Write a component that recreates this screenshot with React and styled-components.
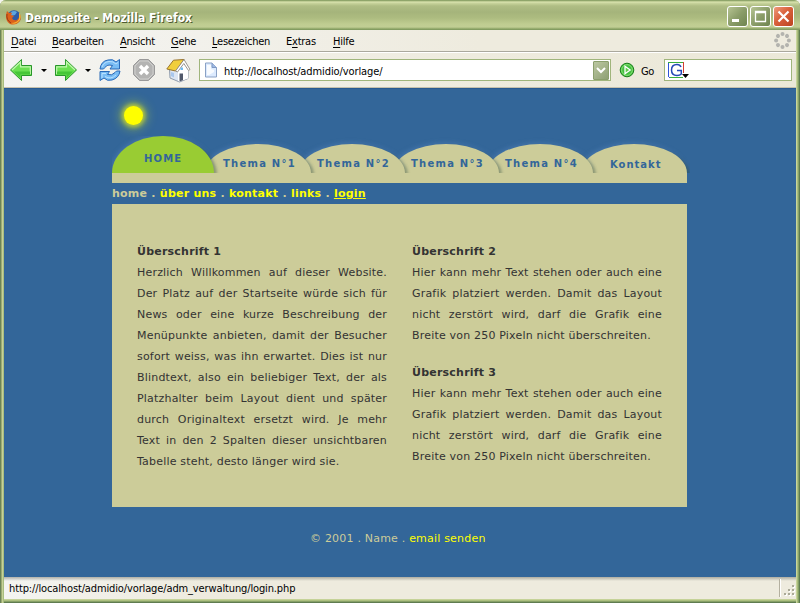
import React from "react";
import styled, { createGlobalStyle } from "styled-components";

const Global = createGlobalStyle`
  * { box-sizing: border-box; }
  body { margin: 0; background: #f4f4ee; overflow: hidden; }
  svg { display: block; flex: none; }
`;
const tahoma = `"DejaVu Sans Condensed", "DejaVu Sans", sans-serif`;
const verdana = `"DejaVu Sans", Verdana, sans-serif`;

const Window = styled.div`
  width: 800px; height: 603px; display: flex; flex-direction: column;
  padding: 0 4px 4px; border-radius: 6px 6px 0 0;
  background:
    linear-gradient(90deg, #6b8458 0 1px, #9cab71 1px 2px, #c5d298 2px 3px, #a9bd7e 3px 4px, transparent 4px 796px, #c8d59c 796px 797px, #a9bc7c 797px 798px, #87a067 798px 799px, #5f7c50 799px),
    linear-gradient(#c5d298 0 600px, #adc080 600px 601px, #87a067 601px 602px, #5f7c50 602px);
`;
const TitleBar = styled.header`
  height: 30px; margin: 0 -4px; padding: 4px 6px 0 5px; flex: none;
  display: flex; align-items: center; border-radius: 6px 6px 0 0;
  background: linear-gradient(#7b955d 0, #a3b578 1px, #dce5b2 2px, #c9d59d 3px, #afbd84 6px, #a5b47b 12px, #adbc80 18px, #bfcc91 24px, #c1ce94 27px, #8ba365 29px, #7b955d 30px);
`;
const Title = styled.h1`
  margin: 1px auto 0 3px; font: bold 12px/18px ${tahoma}; letter-spacing: 0.03px;
  color: #fff; text-shadow: 1px 1px 0 #4d5a31; white-space: nowrap;
`;
const Caption = styled.button`
  width: 21px; height: 21px; margin: -1px 0 0 2px; padding: 0; border: 1px solid #fff; border-radius: 3px;
  background: ${p => p.$close ? "linear-gradient(135deg,#ee9b7d,#d9603b 45%,#bc4421)" : "linear-gradient(135deg,#b6c492,#8b9d69 50%,#6f8550)"};
`;
const MenuBar = styled.nav`
  height: 22px; flex: none; display: flex; align-items: center; gap: 15px; padding: 0 5px 0 7px;
  background: linear-gradient(90deg, #f5f5f4, #eeebde 60%, #eeebde);
  border-bottom: 1px solid #aaa89d; font: 11px/20px ${tahoma}; color: #000;
`;
const MenuItem = styled.span`
  width: ${p => p.$w}px; white-space: nowrap; letter-spacing: -0.25px; padding-top: 2px;
  & u { text-underline-offset: 2px; }
`;
const Spacer = styled.span`flex: 1;`;
const Toolbar = styled.div`
  height: 36px; flex: none; display: flex; align-items: center; padding: 0 4px 0 5px;
  background: linear-gradient(90deg, #f4f4f2, #eeebde 60%, #ebe8d8);
  border-top: 1px solid #fff; border-bottom: 1px solid #c6c1ad; font: 11px/20px ${tahoma};
`;
const Arrow = styled.span`
  border: 3px solid transparent; border-top-color: #000; border-bottom: 0;
  width: 6px; margin: 1px ${p => p.$r}px 0 ${p => p.$l}px;
`;
const IconSlot = styled.span`margin-left: ${p => p.$ml}px;`;
const Field = styled.div`
  height: 22px; width: ${p => p.$w}px; margin-left: ${p => p.$ml}px; padding: 0 1px 0 4px; flex: none;
  display: flex; align-items: center; background: #fff; border: 1px solid #a0b57c;
`;
const Url = styled.span`margin-left: 6px; padding-top: 3px; flex: 1; letter-spacing: -0.1px; white-space: nowrap;`;
const Go = styled.span`margin-left: 6px; padding-top: 3px; width: 16px; letter-spacing: -0.5px;`;
const DropButton = styled.button`
  width: 16px; height: 19px; padding: 0; border: 1px solid #8b9f6d; border-radius: 1px;
  background: linear-gradient(135deg, #bbc7a1, #8fa075); display: flex; align-items: center; justify-content: center;
`;
const Viewport = styled.main`
  height: 489px; flex: none; padding: 0 109px 0 108px; background: #336699; border-top: 1px solid #285a91;
  font: 11px/21px ${verdana};
`;
const Logo = styled.div`height: 47px; padding: 17px 0 0 12px;`;
const Sun = styled.div`
  width: 19px; height: 19px; border-radius: 50%; background: #ff0;
  box-shadow: 0 0 4px 2px rgba(225, 232, 30, .7), 0 0 10px 5px rgba(175, 205, 60, .42);
`;
const Tabs = styled.div`
  height: 37px; display: flex; align-items: flex-end; position: relative; z-index: 0;
  margin-right: -3px; padding-right: 3px; overflow: hidden;
`;
const Tab = styled.a`
  position: relative; z-index: ${p => p.$z}; flex: none;
  width: ${p => p.$active ? 102 : 106}px; height: ${p => p.$active ? 37 : 29}px;
  margin-left: ${p => p.$ml}px; padding: ${p => p.$pt}px 0 0 ${p => p.$pl}px;
  border-radius: 50% 50% 0 0 / 100% 100% 0 0;
  background: ${p => p.$active ? "#99cc33" : "#cccc99"}; color: #336699;
  box-shadow: 3px 2px 3px rgba(45, 70, 55, .38), -1px -1px 5px rgba(105, 150, 205, .35);
  font-weight: bold; font-size: 10px; line-height: 14px; letter-spacing: ${p => p.$ls}px; white-space: nowrap;
`;
const TabBase = styled.div`height: 10px; background: #cccc99;`;
const Crumbs = styled.div`
  height: 21px; line-height: 21px; color: #cccc99; font-weight: bold; letter-spacing: 0.24px; white-space: pre;
  & a { color: #ff0; }
`;
const Panel = styled.section`
  height: 303px; padding: 37px 25px 0; display: grid; grid-template-columns: 250px 250px;
  column-gap: 25px; background: #cccc99; color: #333;
`;
const Article = styled.article`margin-bottom: 16px;`;
const Heading = styled.h2`margin: 0; font: bold 11px/21px ${verdana}; letter-spacing: 0.22px;`;
const Line = styled.div`
  height: 21px; white-space: nowrap; letter-spacing: 0.19px;
  text-align: justify; text-align-last: ${p => p.$end ? "left" : "justify"};
`;
const Footer = styled.footer`
  padding: 21px 0 0 198px; color: #cccc99; white-space: pre; letter-spacing: 0.2px;
  & a { color: #ff0; }
`;
const Status = styled.footer`
  flex: 1; display: flex; align-items: center; padding: 0 0 0 5px;
  background: linear-gradient(rgba(110,110,100,.5), rgba(238,235,222,0) 4px), linear-gradient(90deg,#f4f4f1,#eeebde 25%);
  font: 11px/20px ${tahoma}; letter-spacing: -0.13px; color: #000;
`;
const StatusText = styled.span`padding-top: 2px;`;
const Grip = styled.span`
  height: 18px; width: 17px; display: flex; align-items: flex-end; justify-content: flex-end;
  border-left: 1px solid #b4b0a0; box-shadow: inset 1px 0 #fff;
`;

const Firefox = () => (
  <svg width="17" height="17" viewBox="0 0 17 17">
    <circle cx="9" cy="8" r="6.8" fill="#2d5ba6" />
    <path d="M6 3Q9 1 12 3L10 6L6 7Z" fill="#5da6df" />
    <path d="M2 2L4 4Q6 3 7 4L6 6L9 7L7 9Q8 12 12 11Q15 9 14 4Q17 8 15 12Q11 17 5 15Q-1 11 2 2Z" fill="#dc611a" />
    <path d="M14 3Q18 9 13 13Q10 16 6 14Q12 14 14 10Z" fill="#f5b335" />
    <path d="M2 5Q1 11 6 14" fill="none" stroke="#953c18" />
  </svg>
);
const Direction = ({ right }) => (
  <svg width="24" height="24" viewBox="0 0 24 24">
    <g transform={right ? "translate(24 0) scale(-1 1)" : undefined}>
      <path d="M1.5 12L12.5 1.5V7.5H22.5V17.5H12.5V22.5Z" fill="#6be052" stroke="#28962a" strokeLinejoin="round" />
      <path d="M3 12L11.5 4V8.8H21.3V16" fill="none" stroke="#c0f7ad" strokeWidth="1.2" />
      <path d="M5 13.5H21V16.5H11.5V20Z" fill="#45c637" />
    </g>
  </svg>
);
const Reload = () => (
  <svg width="24" height="24" viewBox="0 0 24 24" strokeLinejoin="round">
    <g fill="#79bdf5" stroke="#2868b7">
      <path d="M2 11Q3 3 10 2Q15 .5 18 4L21.5 1.5V11H12L14.5 7.5Q9 6 7 9.5L5.5 11Z" />
      <path d="M22 13Q21 20 14 22Q9 23.5 6 20L2 22.5V13.5H11.5L9.5 16.5Q14 18 17 14.5L18.5 13Z" />
    </g>
    <path d="M4 9Q6 4 11 3.5Q15 3 18 6L20 4.5M4 20V15.5H8M7 18.5Q13 22 18 17" fill="none" stroke="#b9e0ff" />
  </svg>
);
const Stop = () => (
  <svg width="24" height="24" viewBox="0 0 24 24">
    <path d="M7.5 1.5H16.5L22.5 7.5V16.5L16.5 22.5H7.5L1.5 16.5V7.5Z" fill="#b4b4b3" stroke="#999" />
    <path d="M8 3H16L21 8V16L16 21H8L3 16V8Z" fill="none" stroke="#cfcfcd" />
    <path d="M8 8L16 16M16 8L8 16" stroke="#fff" strokeWidth="3.4" />
  </svg>
);
const Home = () => (
  <svg width="25" height="25" viewBox="0 0 25 25" strokeLinejoin="round">
    <path d="M3.5 11L14 6L22 13V20.5L13.5 24L4 20Z" fill="#dce5f2" stroke="#8f9bac" />
    <path d="M12 13L18 6L22 12V20.5L13.5 23.5L12 23Z" fill="#fff" />
    <path d="M.8 11L7.5 2.2L18 1.5L11 11.5L9.5 13Z" fill="#f0ce3c" stroke="#9a742c" />
    <path d="M18 1.5L24 11.5L22.5 12.5L17.8 5.5L11.5 14L9.5 13Z" fill="#fff" stroke="#817c76" strokeWidth=".8" />
    <path d="M13.5 15.5H17V22.2L13.5 23.5Z" fill="#50586a" />
    <path d="M5 14L8 15V19.5L5 18Z" fill="#a9c7ed" /><path d="M14.5 9.5H17V12H14.5Z" fill="#70bdf3" />
  </svg>
);
const Page = () => (
  <svg width="14" height="16" viewBox="0 0 14 16">
    <path d="M1.5 1H8L12.5 5.5V15H1.5Z" fill="#dceafe" stroke="#8aa1c5" />
    <path d="M3 3H7V7L10 8V10L5 13H3Z" fill="#f8fbff" /><path d="M8 1V5.5H12.5" fill="#9fb9e4" stroke="#7f99c3" />
  </svg>
);
const GoIcon = () => (
  <svg width="16" height="16" viewBox="0 0 16 16">
    <circle cx="8" cy="8" r="6.8" fill="#42bf40" stroke="#197e1b" />
    <circle cx="8" cy="8" r="5.4" fill="none" stroke="#89df75" />
    <path d="M6 4.3L11.2 8L6 11.7Z" fill="#61cc4d" stroke="#fff" strokeWidth="1.3" />
  </svg>
);
const Google = () => (
  <svg width="22" height="20" viewBox="0 0 22 20" transform="translate(-1 0)">
    <path d="M.5 2V17M1 17.5H10" stroke="#2f55d8" fill="none" /><path d="M0 2.5H16" stroke="#39af3d" />
    <path d="M15.5 2V13" stroke="#d63e31" /><path d="M2 17.5H15" stroke="#39af3d" />
    <path d="M13 7Q12 4.5 9 4.5Q3.5 4.5 3.5 10Q3.5 15.5 9 15.5Q12 15.5 13.3 14V10.5H9" stroke="#2448b7" strokeWidth="1.5" fill="none" />
    <path d="M14 14H21L17.5 18Z" fill="#000" />
  </svg>
);
const Throbber = () => (
  <svg width="17" height="17" viewBox="0 0 17 17" fill="#b3b3ae">
    {[0, 45, 90, 135, 180, 225, 270, 315].map(a => <circle key={a} cx="8.5" cy="2.1" r="2" transform={`rotate(${a} 8.5 8.5)`} />)}
  </svg>
);
const CaptionIcon = ({ d, w }) => (
  <svg width="19" height="19" viewBox="0 0 19 19" fill="none" stroke="#fff"><path d={d} strokeWidth={w} /></svg>
);

const menu = [["", "D", "atei", 26], ["", "B", "earbeiten", 53], ["", "A", "nsicht", 36], ["", "G", "ehe", 26], ["", "L", "esezeichen", 59], ["E", "x", "tras", 32], ["", "H", "ilfe", 22]];
const intro = [
  "Herzlich Willkommen auf dieser Website.", "Der Platz auf der Startseite würde sich für",
  "News oder eine kurze Beschreibung der", "Menüpunkte anbieten, damit der Besucher",
  "sofort weiss, was ihn erwartet. Dies ist nur", "Blindtext, also ein beliebiger Text, der als",
  "Platzhalter beim Layout dient und später", "durch Originaltext ersetzt wird. Je mehr",
  "Text in den 2 Spalten dieser unsichtbaren", "Tabelle steht, desto länger wird sie.",
];
const more = [
  "Hier kann mehr Text stehen oder auch eine", "Grafik platziert werden. Damit das Layout",
  "nicht zerstört wird, darf die Grafik eine", "Breite von 250 Pixeln nicht überschreiten.",
];
const Section = ({ title, lines }) => (
  <Article>
    <Heading>{title}</Heading>
    {lines.map((text, i) => <Line key={i} $end={i === lines.length - 1}>{text}</Line>)}
  </Article>
);

export default function App() {
  return (
    <Window>
      <Global />
      <TitleBar>
        <Firefox /><Title>Demoseite - Mozilla Firefox</Title>
        <Caption><CaptionIcon d="M4 13.5H11" w="3" /></Caption>
        <Caption><CaptionIcon d="M4.5 4.5H14.5V14.5H4.5ZM4 5.5H15" w="1.3" /></Caption>
        <Caption $close><CaptionIcon d="M4.5 4.5L14.5 14.5M14.5 4.5L4.5 14.5" w="2.2" /></Caption>
      </TitleBar>
      <MenuBar>
        {menu.map(([a, b, c, w]) => <MenuItem key={b} $w={w}>{a}<u>{b}</u>{c}</MenuItem>)}
        <Spacer /><Throbber />
      </MenuBar>
      <Toolbar>
        <Direction /><Arrow $l={8} $r={7} /><Direction right /><Arrow $l={7} $r={7} />
        <Reload /><IconSlot $ml={10}><Stop /></IconSlot><IconSlot $ml={10}><Home /></IconSlot>
        <Field $w={412} $ml={8}>
          <Page /><Url>http://localhost/admidio/vorlage/</Url>
          <DropButton><svg width="10" height="8" viewBox="0 0 10 8"><path d="M1 2L5 6L9 2" fill="none" stroke="#fff" strokeWidth="2" /></svg></DropButton>
        </Field>
        <Spacer /><GoIcon /><Go>Go</Go>
        <Field $w={128} $ml={7}><Google /></Field>
      </Toolbar>
      <Viewport>
        <Logo><Sun /></Logo>
        <Tabs>
          <Tab $active $z={6} $ml={0} $pt={16} $pl={32} $ls={1.15}>HOME</Tab>
          {[1, 2, 3, 4].map(n => <Tab key={n} $z={6 - n} $ml={n === 1 ? -9 : -12} $pt={13} $pl={18} $ls={1.25}>Thema N°{n}</Tab>)}
          <Tab $z={1} $ml={-12} $pt={14} $pl={29} $ls={1}>Kontakt</Tab>
        </Tabs>
        <TabBase />
        <Crumbs>home . <a>über uns</a> . <a>kontakt</a> . <a>links</a> . <a><u>login</u></a></Crumbs>
        <Panel>
          <div><Section title="Überschrift 1" lines={intro} /></div>
          <div><Section title="Überschrift 2" lines={more} /><Section title="Überschrift 3" lines={more} /></div>
        </Panel>
        <Footer>© 2001 . Name . <a>email senden</a></Footer>
      </Viewport>
      <Status>
        <StatusText>http://localhost/admidio/vorlage/adm_verwaltung/login.php</StatusText><Spacer />
        <Grip><svg width="12" height="12" viewBox="0 0 12 12">
          {[[8, 0], [4, 4], [8, 4], [0, 8], [4, 8], [8, 8]].map(([x, y]) => <g key={`${x}-${y}`}><path d={`M${x + 1} ${y + 1}h2v2h-2z`} fill="#fff" /><path d={`M${x} ${y}h2v2h-2z`} fill="#aaa997" /></g>)}
        </svg></Grip>
      </Status>
    </Window>
  );
}
